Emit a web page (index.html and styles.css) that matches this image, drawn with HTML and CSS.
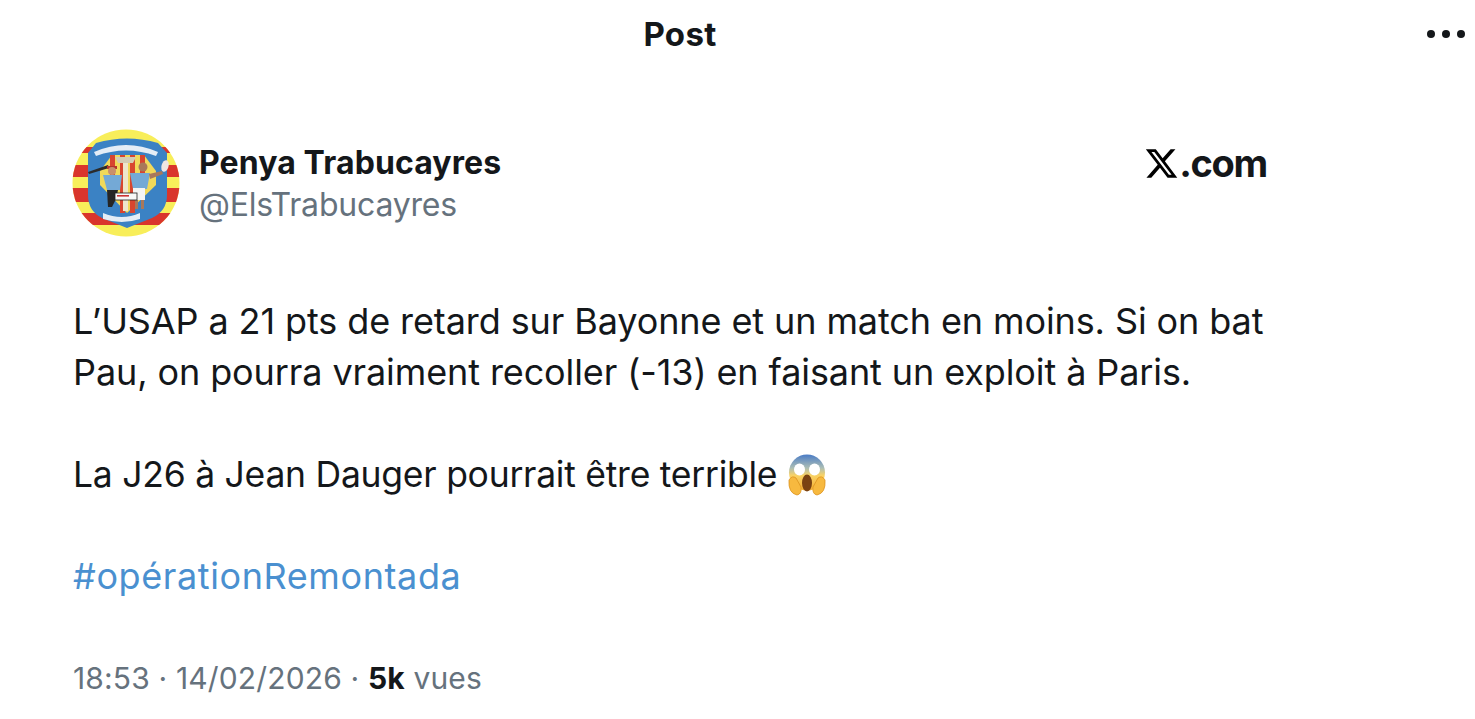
FILE: index.html
```html
<!DOCTYPE html>
<html lang="fr">
<head>
  <meta charset="UTF-8" />
  <title>Post</title>
  <link rel="stylesheet" href="styles.css">
</head>
<body>

  <header class="top-bar">
    <h1>Post</h1>
    <div class="more"><span></span><span></span><span></span></div>
  </header>

  <main class="post">
    <!-- Author -->
    <div class="author">
      <svg class="avatar" viewBox="0 0 108 108" aria-label="Penya Trabucayres">
        <defs>
          <clipPath id="disc"><circle cx="54" cy="54" r="53.5"/></clipPath>
          <clipPath id="shield"><path d="M24 14 Q55 5 86 14 L95 24 V66 Q95 82 80 89 L55 99 L30 89 Q16 82 16 66 V24 Z"/></clipPath>
        </defs>
        <g clip-path="url(#disc)">
          <rect width="108" height="108" fill="#f8ee5a"/>
          <rect x="0" y="18" width="108" height="6" fill="#d9352c"/>
          <rect x="0" y="36" width="108" height="12" fill="#d9352c"/>
          <rect x="0" y="59" width="108" height="14" fill="#d9352c"/>
          <rect x="0" y="84" width="108" height="12" fill="#d9352c"/>
        </g>
        <g clip-path="url(#shield)">
          <rect x="16" y="5" width="79" height="95" fill="#3b82c4"/>
          <path d="M28 42 L40 26 H72 L84 42 V56 L55 84 L28 56 Z" fill="#f1d95a"/>
          <path d="M38 26 h5 v46 h-5z M48 26 h5 v58 h-5z M58 26 h5 v58 h-5z M68 26 h5 v42 h-5z" fill="#d8452f"/>
        </g>
        <path d="M22 23 Q54 9 86 23 L84 27 Q54 16 24 27 Z" fill="#e4edf6"/>
        <path d="M43 28 H64 L61 34 H46 Z" fill="#d3ccb4"/>
        <rect x="51" y="34" width="5" height="48" fill="#eee6cc"/>
        <path d="M37 39 L17 45 L16 43 L36 36 Z" fill="#2b2b2b"/>
        <rect x="35" y="37" width="10" height="3" fill="#b5332b"/>
        <circle cx="40" cy="42" r="4" fill="#c98f6b"/>
        <path d="M31 46 H50 L48 61 H35 Z" fill="#74a9d6"/>
        <path d="M35 61 H46 L44 70 L40 78 H36 Z" fill="#252525"/>
        <circle cx="71" cy="38" r="4.5" fill="#a9785a"/>
        <path d="M58 44 H78 L75 60 H61 Z" fill="#74a9d6"/>
        <rect x="61" y="59" width="12" height="12" fill="#f5f5f5"/>
        <path d="M63 71 h3 v9 h-3z M69 71 h3 v9 h-3z" fill="#a9785a"/>
        <path d="M77 45 L90 42 L91 45 L78 50 Z" fill="#a9785a"/>
        <ellipse cx="93" cy="37" rx="3.5" ry="6" transform="rotate(15 93 37)" fill="#efe6e2"/>
        <rect x="43" y="64" width="22" height="7" fill="#f8f8f8" stroke="#222" stroke-width="0.8"/>
        <rect x="45" y="66" width="12" height="1.6" fill="#c33"/>
        <path d="M31 84 Q50 92 68 84 L68 90 Q50 96 31 90 Z" fill="#e4edf6"/>
      </svg>
      <div class="names">
        <div class="name">Penya Trabucayres</div>
        <div class="handle">@ElsTrabucayres</div>
      </div>
      <div class="brand">
        <svg viewBox="0 0 24 24"><path d="M18.244 2.25h3.308l-7.227 8.26 8.502 11.24H16.17l-5.214-6.817L4.99 21.75H1.68l7.73-8.835L1.254 2.25H8.08l4.713 6.231zm-1.161 17.52h1.833L7.084 4.126H5.117z"/></svg>
        <span>.com</span>
      </div>
    </div>

    <!-- Tweet text -->
    <p class="text lead">L’USAP a 21 pts de retard sur Bayonne et un match en moins. Si on bat<br>Pau, on pourra vraiment recoller (-13) en faisant un exploit à Paris.</p>
    <p class="text second">La J26 à Jean Dauger pourrait être terrible
      <svg class="emoji" viewBox="0 0 40 42">
        <defs>
          <linearGradient id="face" x1="0" y1="0" x2="0" y2="1">
            <stop offset="0" stop-color="#4a7cc6"/>
            <stop offset="0.38" stop-color="#aebfb4"/>
            <stop offset="0.58" stop-color="#f9d264"/>
            <stop offset="1" stop-color="#f4ae33"/>
          </linearGradient>
        </defs>
        <circle cx="20" cy="18.5" r="18" fill="url(#face)"/>
        <ellipse cx="12.5" cy="15.5" rx="5.5" ry="6" fill="#fff"/>
        <ellipse cx="27.5" cy="15.5" rx="5.5" ry="6" fill="#fff"/>
        <ellipse cx="20" cy="29" rx="5" ry="8.5" fill="#7a4212"/>
        <path d="M2 26 Q1 39 10 41 Q15 40 14 33 L9 24 Q5 21 2 26 Z" fill="#f7b93f" stroke="#dc931f" stroke-width="0.8"/>
        <path d="M38 26 Q39 39 30 41 Q25 40 26 33 L31 24 Q35 21 38 26 Z" fill="#f7b93f" stroke="#dc931f" stroke-width="0.8"/>
      </svg>
    </p>
    <p class="text tag">#opérationRemontada</p>

    <!-- Meta line -->
    <div class="meta">18:53 · 14/02/2026 · <b>5k</b> vues</div>
  </main>

</body>
</html>
```

FILE: styles.css
```css
body {
  font-family: Inter, 'Liberation Sans', sans-serif;
  margin: 0;
  background: #fff;
  color: #14171a;
  height: 719px;
  overflow: hidden;
}

.top-bar {
  display: grid;
  grid-template-columns: 1360px 1fr;
  align-items: center;
  height: 68px;
}

.top-bar h1 {
  font-size: 33px;
  font-weight: 700;
  letter-spacing: 0.3px;
  margin: 0;
  text-align: center;
}

.more {
  display: flex;
  justify-content: flex-end;
  gap: 7px;
  padding-right: 10px;
}

.more span {
  width: 8px;
  height: 8px;
  border-radius: 50%;
  background: #14171a;
}

.post {
  width: 1194px;
  margin-left: 73px;
}

.author {
  display: flex;
  align-items: center;
  margin-top: 61px;
  margin-left: -1px;
}

.avatar {
  width: 108px;
  height: 108px;
  flex: none;
}

.names {
  margin-left: 19px;
  padding-top: 2px;
  flex: 1;
}

.name {
  font-size: 32px;
  font-weight: 700;
  letter-spacing: 0.1px;
  line-height: 42px;
}

.handle {
  font-size: 32px;
  letter-spacing: -0.2px;
  line-height: 42px;
  color: #66727d;
}

.brand {
  display: flex;
  align-items: center;
  align-self: flex-start;
  margin-top: 11px;
  font-size: 38px;
  font-weight: 700;
  letter-spacing: -1.3px;
}

.brand svg {
  width: 35px;
  height: 35px;
}

.text {
  font-size: 36px;
  letter-spacing: -0.1px;
  line-height: 51px;
  margin: 0 0 51px;
}

.lead {
  margin-top: 59px;
}

.second {
  font-size: 35.5px;
  letter-spacing: -0.25px;
}

.emoji {
  width: 40px;
  height: 42px;
  vertical-align: -9px;
}

.tag {
  color: #4a90d0;
  letter-spacing: 0.6px;
  margin-bottom: 55px;
}

.meta {
  font-size: 30px;
  letter-spacing: 0.15px;
  line-height: 42px;
  color: #66727d;
}

.meta b {
  color: #14171a;
}
```
